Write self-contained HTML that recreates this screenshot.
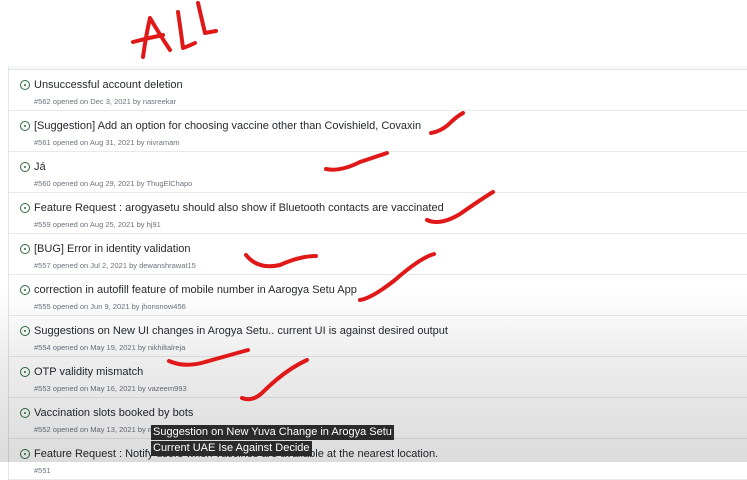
<!DOCTYPE html>
<html><head><meta charset="utf-8"><style>
*{margin:0;padding:0;box-sizing:border-box}
body{width:747px;height:462px;overflow:hidden;background:#fff;position:relative;font-family:"Liberation Sans",sans-serif}
.box{position:absolute;left:8px;top:66px;width:760px;border-left:1px solid #e1e4e8}
.hd{height:4px;background:#f6f8fa;border-bottom:1px solid #e1e4e8}
.row{height:41px;border-bottom:1px solid #e6e8ea;position:relative}
.ic{position:absolute;left:11px;top:10px;width:10px;height:10px;border:1.3px solid #2c6a3c;border-radius:50%}
.ic:after{content:"";position:absolute;left:2.6px;top:2.6px;width:2.2px;height:2.2px;border-radius:50%;background:#2c6a3c}
.t{position:absolute;left:25px;top:9px;font-size:11px;color:#24292e;white-space:nowrap}
.m{position:absolute;left:25px;top:27px;font-size:7.5px;color:#6a737d;white-space:nowrap}
.shade{position:absolute;left:0;top:290px;width:747px;height:172px;background:linear-gradient(#ffffff00,#00000012 40%,#00000024);pointer-events:none}
.cap{position:absolute;background:#2b2b2b;color:#fff;font-size:11px;line-height:15px;padding:0 2px;white-space:nowrap}
svg{position:absolute;left:0;top:0}
</style></head><body>
<div class="box">
<div class="hd"></div>
<div class="row"><div class="ic"></div><div class="t">Unsuccessful account deletion</div><div class="m">#562 opened on Dec 3, 2021 by nasreekar</div></div>
<div class="row"><div class="ic"></div><div class="t">[Suggestion] Add an option for choosing vaccine other than Covishield, Covaxin</div><div class="m">#561 opened on Aug 31, 2021 by nivramam</div></div>
<div class="row"><div class="ic"></div><div class="t">Já</div><div class="m">#560 opened on Aug 29, 2021 by ThugElChapo</div></div>
<div class="row"><div class="ic"></div><div class="t">Feature Request : arogyasetu should also show if Bluetooth contacts are vaccinated</div><div class="m">#559 opened on Aug 25, 2021 by hj91</div></div>
<div class="row"><div class="ic"></div><div class="t">[BUG] Error in identity validation</div><div class="m">#557 opened on Jul 2, 2021 by dewanshrawat15</div></div>
<div class="row"><div class="ic"></div><div class="t">correction in autofill feature of mobile number in Aarogya Setu App</div><div class="m">#555 opened on Jun 9, 2021 by jhonsnow456</div></div>
<div class="row"><div class="ic"></div><div class="t">Suggestions on New UI changes in Arogya Setu.. current UI is against desired output</div><div class="m">#554 opened on May 19, 2021 by nikhiltalreja</div></div>
<div class="row"><div class="ic"></div><div class="t">OTP validity mismatch</div><div class="m">#553 opened on May 16, 2021 by vazeem993</div></div>
<div class="row"><div class="ic"></div><div class="t">Vaccination slots booked by bots</div><div class="m">#552 opened on May 13, 2021 by mnyalo</div></div>
<div class="row"><div class="ic"></div><div class="t">Feature Request : Notify users when vaccines are available at the nearest location.</div><div class="m">#551</div></div>
</div>
<div class="shade"></div>
<svg width="747" height="462" fill="none" stroke="#e01818" stroke-width="4" stroke-linecap="round" stroke-linejoin="round">
<path d="M143 57 Q146 35 150 18 Q160 35 170 50"/>
<path d="M133 42 Q148 38 163 35"/>
<path d="M178 12 Q181 32 183 48 Q189 46 195 43"/>
<path d="M198 3 Q202 20 205 33 Q210 32 216 31"/>
<path d="M431 133 Q442 131 450 123 Q456 117 463 113"/>
<path d="M326 169 Q340 172 360 162 Q375 157 387 153"/>
<path d="M427 220 Q440 226 460 214 Q480 200 493 192"/>
<path d="M246 255 Q258 270 280 265 Q300 256 316 256"/>
<path d="M360 300 Q372 298 395 280 Q420 258 434 254"/>
<path d="M169 361 Q185 368 205 362 Q230 355 248 350"/>
<path d="M242 398 Q252 402 262 393 Q285 370 307 360"/>
</svg>
<div class="cap" style="left:151px;top:425px">Suggestion on New Yuva Change in Arogya Setu</div>
<div class="cap" style="left:151px;top:441px">Current UAE Ise Against Decide</div>
</body></html>
